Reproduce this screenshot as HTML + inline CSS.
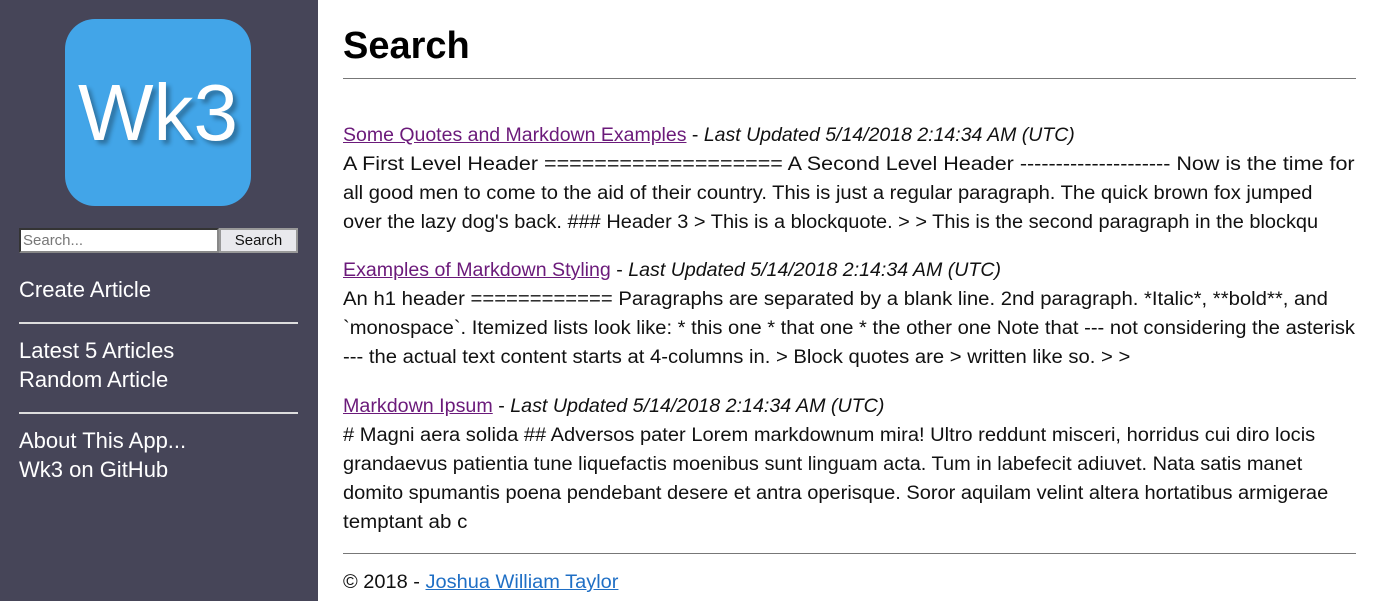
<!DOCTYPE html>
<html><head><meta charset="utf-8"><style>
body{margin:0;width:1379px;height:601px;overflow:hidden;background:#fff;font-family:"Liberation Sans",sans-serif;position:relative}
#side{position:absolute;left:0;top:0;width:318px;height:601px;background:#464558}
.logo{position:absolute;left:65px;top:19px;width:186px;height:187px;background:#42a5e8;border-radius:30px;color:#fff;font-size:80px;text-align:center;line-height:187px;text-shadow:4px 4px 4px rgba(0,0,0,.3)}
.in{position:absolute;left:19px;top:228px;width:194px;height:21px;border:2px inset #888;background:#fff;font-size:15px;color:#777;line-height:21px;padding-left:2px;box-sizing:content-box}
.btn{position:absolute;left:219px;top:228px;width:75px;height:21px;border:2px solid #999;background:#e9e9ed;font-size:15px;color:#111;text-align:center;line-height:21px}
.nav{position:absolute;left:19px;color:#fff;font-size:22px;line-height:29px;white-space:nowrap}
.shr{position:absolute;left:19px;width:279px;height:0;border-top:2px solid #ddd}
.l{position:absolute;left:343px;font-size:19px;line-height:29px;white-space:nowrap;color:#111;transform-origin:0 50%}
a{color:#6b1a7a}
i{color:#111}
.hr{position:absolute;left:343px;width:1013px;border-top:1px solid #777}
</style></head><body>
<div id="side">
<div class="logo">Wk3</div>
<div class="in">Search...</div>
<div class="btn">Search</div>
<div class="nav" style="top:275px">Create Article</div>
<div class="shr" style="top:322px"></div>
<div class="nav" style="top:336px">Latest 5 Articles</div>
<div class="nav" style="top:365px">Random Article</div>
<div class="shr" style="top:412px"></div>
<div class="nav" style="top:426px">About This App...</div>
<div class="nav" style="top:455px">Wk3 on GitHub</div>
</div>
<div style="position:absolute;left:343px;top:22px;font-size:38px;font-weight:bold;line-height:48px">Search</div>
<div class="hr" style="top:78px"></div>
<div class="l" style="top:121px;transform:scaleX(1.026)"><a href="#">Some Quotes and Markdown Examples</a> - <i>Last Updated 5/14/2018 2:14:34 AM (UTC)</i></div>
<div class="l" style="top:150px;transform:scaleX(1.133)">A First Level Header =================== A Second Level Header --------------------- Now is the time for</div>
<div class="l" style="top:179px;transform:scaleX(1.060)">all good men to come to the aid of their country. This is just a regular paragraph. The quick brown fox jumped</div>
<div class="l" style="top:208px;transform:scaleX(1.050)">over the lazy dog's back. ### Header 3 &gt; This is a blockquote. &gt; &gt; This is the second paragraph in the blockqu</div>
<div class="l" style="top:256px;transform:scaleX(1.031)"><a href="#">Examples of Markdown Styling</a> - <i>Last Updated 5/14/2018 2:14:34 AM (UTC)</i></div>
<div class="l" style="top:285px;transform:scaleX(1.068)">An h1 header ============ Paragraphs are separated by a blank line. 2nd paragraph. *Italic*, **bold**, and</div>
<div class="l" style="top:314px;transform:scaleX(1.060)">`monospace`. Itemized lists look like: * this one * that one * the other one Note that --- not considering the asterisk</div>
<div class="l" style="top:343px;transform:scaleX(1.065)">--- the actual text content starts at 4-columns in. &gt; Block quotes are &gt; written like so. &gt; &gt;</div>
<div class="l" style="top:392px;transform:scaleX(1.035)"><a href="#">Markdown Ipsum</a> - <i>Last Updated 5/14/2018 2:14:34 AM (UTC)</i></div>
<div class="l" style="top:421px;transform:scaleX(1.057)"># Magni aera solida ## Adversos pater Lorem markdownum mira! Ultro reddunt misceri, horridus cui diro locis</div>
<div class="l" style="top:450px;transform:scaleX(1.050)">grandaevus patientia tune liquefactis moenibus sunt linguam acta. Tum in labefecit adiuvet. Nata satis manet</div>
<div class="l" style="top:479px;transform:scaleX(1.054)">domito spumantis poena pendebant desere et antra operisque. Soror aquilam velint altera hortatibus armigerae</div>
<div class="l" style="top:508px;transform:scaleX(1.08)">temptant ab c</div>
<div class="hr" style="top:553px"></div>
<div class="l" style="top:568px;transform:scaleX(1.052)">© 2018 - <a href="#" style="color:#1f6fc5">Joshua William Taylor</a></div>
</body></html>
